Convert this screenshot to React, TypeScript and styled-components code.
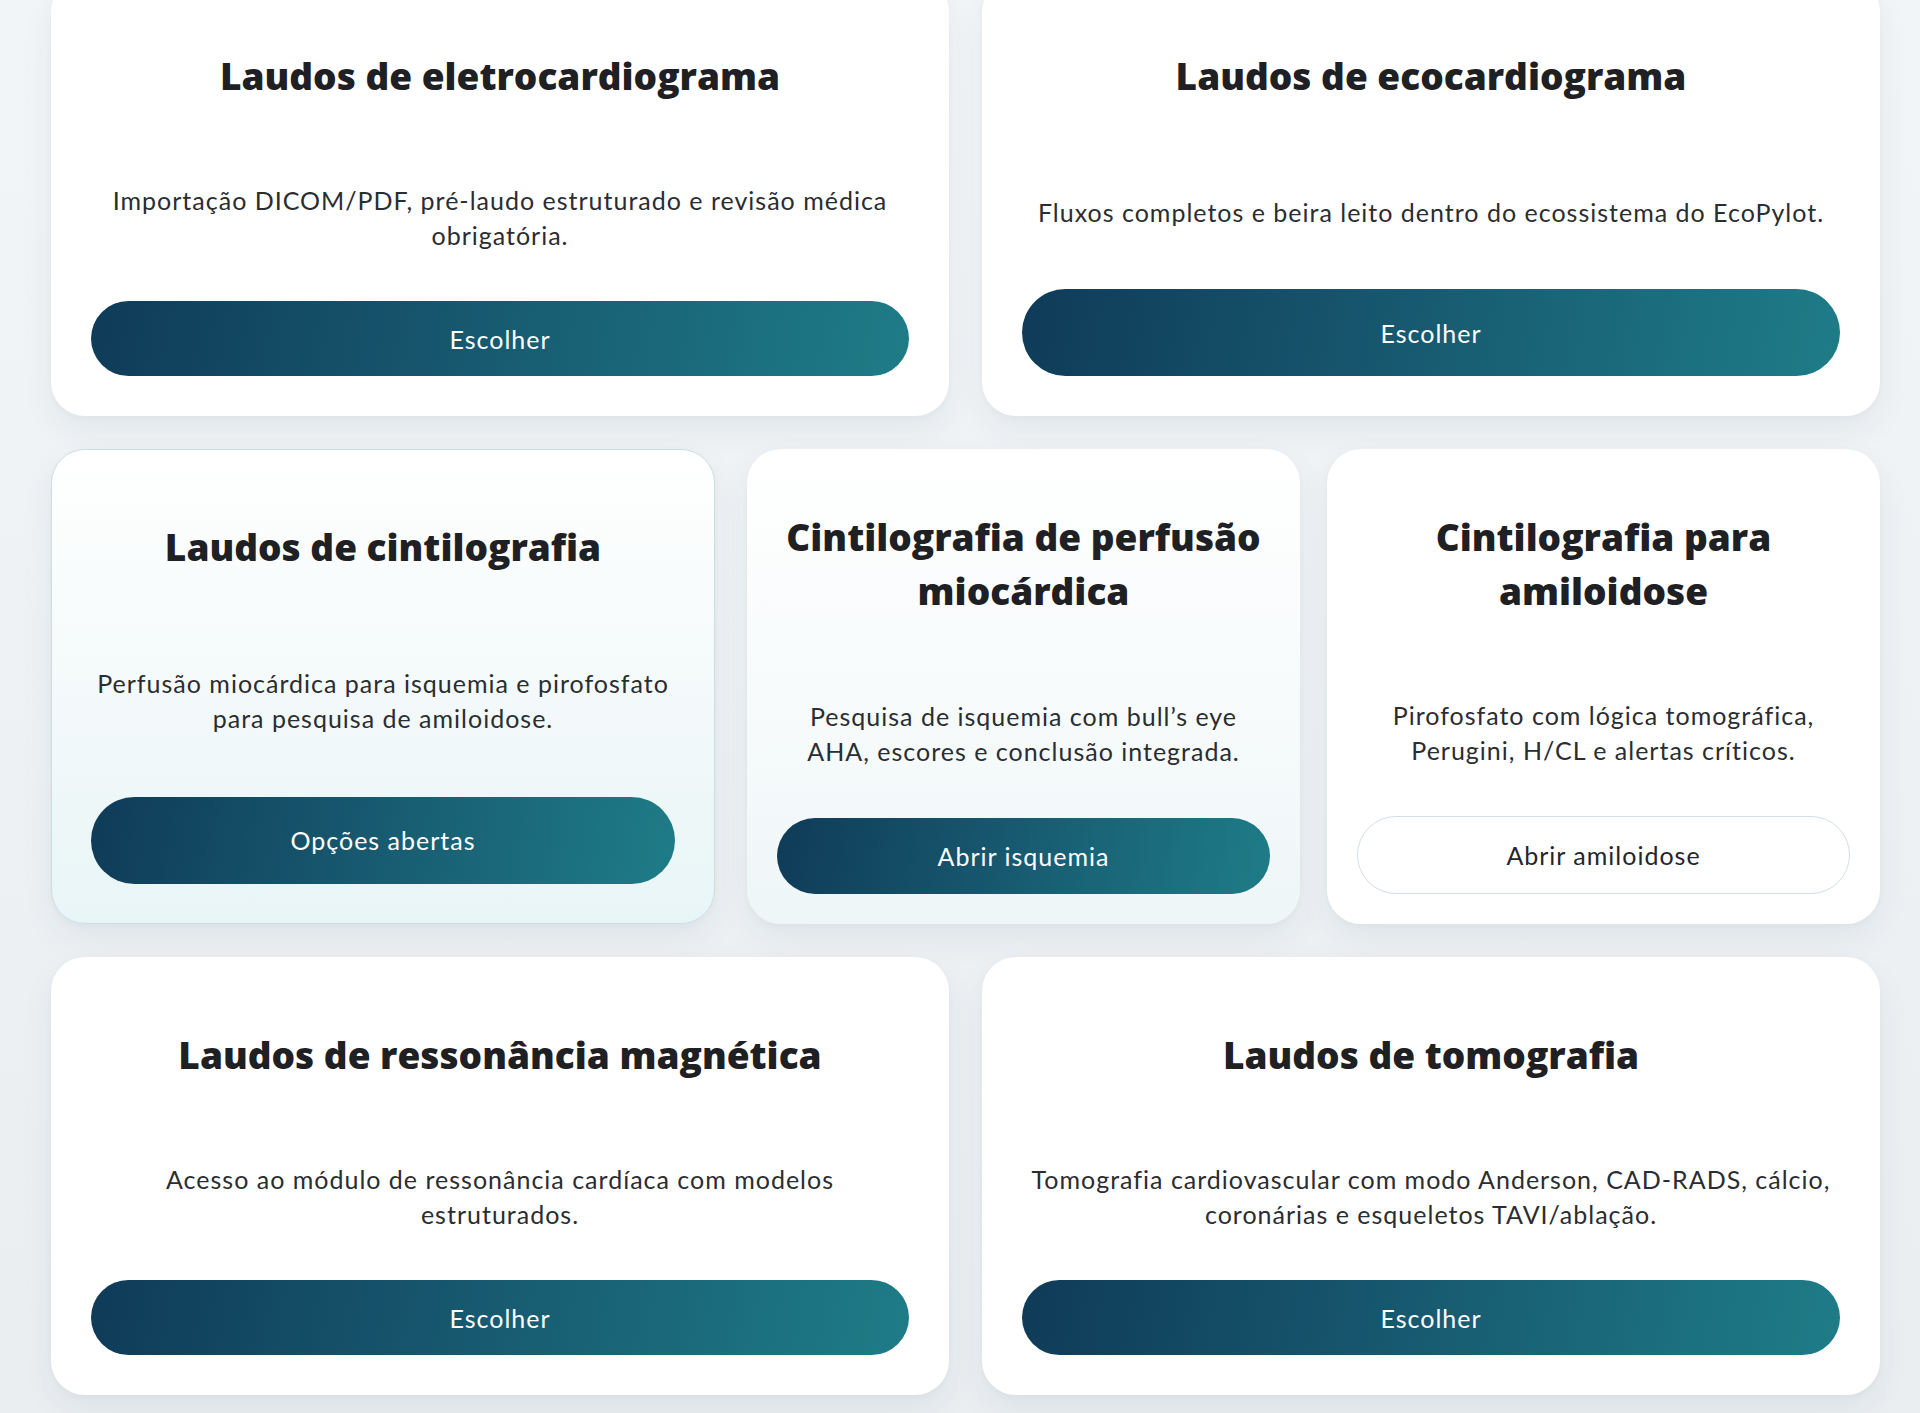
import React from 'react';
import styled, { createGlobalStyle, css } from 'styled-components';

const GlobalStyle = createGlobalStyle`
  html, body {
    margin: 0;
    padding: 0;
  }
  body {
    background: #eef1f3;
    font-family: Lato, 'Noto Sans', sans-serif;
    color: #1f2226;
  }
`;

type Variant = 'plain' | 'active' | 'sub';

interface Option {
	title: string;
	text: string;
	action: string;
	outline?: boolean;
}

const topRow: Option[] = [
	{
		title: 'Laudos de eletrocardiograma',
		text: 'Importação DICOM/PDF, pré-laudo estruturado e revisão médica obrigatória.',
		action: 'Escolher',
	},
	{
		title: 'Laudos de ecocardiograma',
		text: 'Fluxos completos e beira leito dentro do ecossistema do EcoPylot.',
		action: 'Escolher',
	},
];

const scinti: Option = {
	title: 'Laudos de cintilografia',
	text: 'Perfusão miocárdica para isquemia e pirofosfato para pesquisa de amiloidose.',
	action: 'Opções abertas',
};

const scintiOptions: Option[] = [
	{
		title: 'Cintilografia de perfusão miocárdica',
		text: 'Pesquisa de isquemia com bull’s eye AHA, escores e conclusão integrada.',
		action: 'Abrir isquemia',
	},
	{
		title: 'Cintilografia para amiloidose',
		text: 'Pirofosfato com lógica tomográfica, Perugini, H/CL e alertas críticos.',
		action: 'Abrir amiloidose',
		outline: true,
	},
];

const bottomRow: Option[] = [
	{
		title: 'Laudos de ressonância magnética',
		text: 'Acesso ao módulo de ressonância cardíaca com modelos estruturados.',
		action: 'Escolher',
	},
	{
		title: 'Laudos de tomografia',
		text: 'Tomografia cardiovascular com modo Anderson, CAD-RADS, cálcio, coronárias e esqueletos TAVI/ablação.',
		action: 'Escolher',
	},
];

function ExamCard({ option, variant = 'plain' }: { option: Option; variant?: Variant }) {
	return (
		<Card $variant={variant}>
			<Title>{option.title}</Title>
			<Description>{option.text}</Description>
			<ActionButton type="button" $outline={option.outline}>
				{option.action}
			</ActionButton>
		</Card>
	);
}

export default function App() {
	return (
		<>
			<GlobalStyle />
			<Page>
				<Stack>
					<PairRow>
						{topRow.map((o) => (
							<ExamCard key={o.title} option={o} />
						))}
					</PairRow>
					<SplitRow>
						<ExamCard option={scinti} variant="active" />
						<SubGrid>
							{scintiOptions.map((o) => (
								<ExamCard key={o.title} option={o} variant="sub" />
							))}
						</SubGrid>
					</SplitRow>
					<PairRow>
						{bottomRow.map((o) => (
							<ExamCard key={o.title} option={o} />
						))}
					</PairRow>
				</Stack>
			</Page>
		</>
	);
}

const Page = styled.main`
	box-sizing: border-box;
	min-height: 1413px;
	padding: 0 40px 0 51px;
	overflow: hidden;
	background: linear-gradient(180deg, #f2f5f7 0%, #eaeef1 100%);
`;

const Stack = styled.div`
	display: flex;
	flex-direction: column;
	gap: 33px;
	margin-top: -22px;
`;

const PairRow = styled.div`
	display: grid;
	grid-template-columns: 1fr 1fr;
	gap: 33px;
`;

const SplitRow = styled.div`
	display: grid;
	grid-template-columns: 664px 1fr;
	gap: 32px;
`;

const SubGrid = styled.div`
	display: grid;
	grid-template-columns: 1fr 1fr;
	gap: 27px;
`;

const Card = styled.section<{ $variant: Variant }>`
	box-sizing: border-box;
	display: grid;
	row-gap: 48px;
	padding: 40px;
	border-radius: 34px;
	background: #ffffff;
	box-shadow: 0 14px 34px rgba(22, 48, 66, 0.06), 0 2px 6px rgba(22, 48, 66, 0.03);
	text-align: center;

	${({ $variant }) =>
		$variant === 'active' &&
		css`
			border: 1px solid #c9dfe3;
			padding: 39px;
			background: linear-gradient(180deg, #ffffff 0%, #f3f9fa 55%, #e8f5f6 100%);
		`}

	${({ $variant }) =>
		$variant === 'sub' &&
		css`
			padding: 30px;
			background: linear-gradient(180deg, #ffffff 0%, #f6fafb 60%, #eef6f8 100%);

			&:last-child {
				background: #ffffff;
			}
		`}
`;

const Title = styled.h2`
	margin: 31px 0 32px;
	font-family: 'Open Sans', Lato, sans-serif;
	font-size: 37px;
	line-height: 54px;
	font-weight: 800;
	color: #1e2023;
`;

const Description = styled.p`
	margin: 0;
	font-size: 25px;
	line-height: 35px;
	font-weight: 400;
	letter-spacing: 1px;
	color: #2a2d31;
`;

const ActionButton = styled.button<{ $outline?: boolean }>`
	box-sizing: border-box;
	display: flex;
	align-items: center;
	justify-content: center;
	min-height: 75px;
	width: 100%;
	border: none;
	border-radius: 999px;
	font-family: inherit;
	font-size: 25px;
	letter-spacing: 1px;
	color: #ffffff;
	background: linear-gradient(100deg, #0f3b58 0%, #17586f 45%, #1e7c87 100%);
	cursor: pointer;

	${({ $outline }) =>
		$outline &&
		css`
			min-height: 78px;
			border: 1.5px solid #d6dee4;
			color: #23262a;
			background: #ffffff;
		`}
`;
